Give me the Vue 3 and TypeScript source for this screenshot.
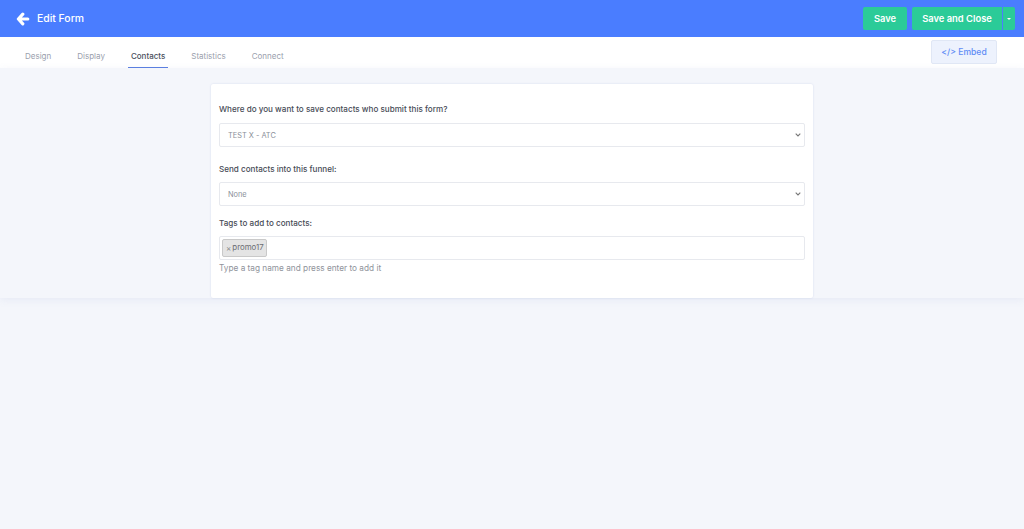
<template>
  <div class="page">
    <header class="topbar">
      <div class="topbar__title">
        <svg class="back-icon" width="14" height="14" viewBox="0 0 14 14" aria-hidden="true">
          <path d="M6.8 2.2 2.4 7l4.4 4.8M3.4 7h8.4" fill="none" stroke="#fff" stroke-width="3.2" stroke-linecap="round" stroke-linejoin="round" />
        </svg>
        <span>Edit Form</span>
      </div>
      <div class="topbar__actions">
        <button class="btn">Save</button>
        <div class="btn-group">
          <button class="btn btn--main">Save and Close</button>
          <button class="btn btn--caret"><span class="caret"></span></button>
        </div>
      </div>
    </header>

    <nav class="tabs">
      <div class="tabs__list">
        <a v-for="tab in tabs" :key="tab" class="tab" :class="{ 'tab--active': tab === 'Contacts' }">{{ tab }}</a>
      </div>
      <button class="embed">&lt;/&gt; Embed</button>
    </nav>

    <main class="panel">
      <section class="card">
        <label class="label">Where do you want to save contacts who submit this form?</label>
        <select class="field">
          <option>TEST X - ATC</option>
        </select>

        <label class="label label--second">Send contacts into this funnel:</label>
        <select class="field">
          <option>None</option>
        </select>

        <label class="label label--third">Tags to add to contacts:</label>
        <div class="tags">
          <span class="tag"><span class="tag__x">×</span>promo17</span>
        </div>
        <p class="hint">Type a tag name and press enter to add it</p>
      </section>
    </main>
  </div>
</template>

<script setup lang="ts">
const tabs: string[] = ['Design', 'Display', 'Contacts', 'Statistics', 'Connect']
</script>

<style>
html,
body {
  margin: 0;
  background: #f4f6fb;
}
</style>

<style scoped>
.page {
  height: 529px;
  overflow: hidden;
  background: #f4f6fb;
  font-family: Inter, "Liberation Sans", sans-serif;
}

.topbar {
  height: 37px;
  display: flex;
  align-items: center;
  justify-content: space-between;
  padding: 0 9px 0 16px;
  background: #4a7dff;
}

.topbar__title {
  display: flex;
  align-items: center;
  gap: 7px;
  color: #fff;
  font-size: 10.4px;
  font-weight: 500;
}

.topbar__actions {
  display: flex;
  gap: 5px;
}

.btn {
  width: 44px;
  height: 23px;
  padding: 0;
  border: none;
  border-radius: 2px;
  background: #2bcb98;
  color: #fff;
  font: 600 9.4px Inter, "Liberation Sans", sans-serif;
  white-space: nowrap;
}

.btn-group {
  display: flex;
}

.btn--main {
  width: 90px;
  border-radius: 2px 0 0 2px;
}

.btn--caret {
  width: 12px;
  margin-left: 1px;
  border-radius: 0 2px 2px 0;
  display: flex;
  align-items: center;
  justify-content: center;
}

.caret {
  width: 0;
  height: 0;
  border-left: 2px solid transparent;
  border-right: 2px solid transparent;
  border-top: 2px solid #fff;
}

.tabs {
  height: 31px;
  display: flex;
  justify-content: space-between;
  padding: 0 27px 0 25px;
  background: #fff;
}

.tabs__list {
  display: flex;
  gap: 26px;
}

.tab {
  position: relative;
  display: block;
  padding-top: 14px;
  color: #9aa0ad;
  font-size: 8px;
  line-height: 11px;
}

.tab--active {
  color: #4a4f5c;
  font-weight: 500;
}

.tab--active::after {
  content: "";
  position: absolute;
  left: -3px;
  right: -3px;
  top: 30px;
  height: 1px;
  background: #5b7fe0;
}

.embed {
  height: 24px;
  width: 66px;
  margin-top: 3px;
  padding: 0;
  border: 1px solid #e0e7f5;
  border-radius: 2px;
  background: #edf2fd;
  color: #5f8cf5;
  font: 500 8.6px Inter, "Liberation Sans", sans-serif;
}

.panel {
  height: 230px;
  padding-top: 16px;
  box-sizing: border-box;
  box-shadow: 0 2px 8px rgba(120, 140, 200, 0.1);
}

.card {
  width: 602px;
  height: 214px;
  margin: 0 auto;
  padding: 19px 8px 0;
  box-sizing: border-box;
  border-radius: 2px;
  background: #fff;
  box-shadow: 0 0 2px rgba(120, 140, 200, 0.25);
}

.label {
  display: block;
  color: #474b56;
  font-size: 8.1px;
  font-weight: 500;
  line-height: 12px;
  margin-bottom: 8px;
}

.label--second {
  margin-top: 16px;
  margin-bottom: 7px;
}

.label--third {
  margin-top: 11px;
  margin-bottom: 7px;
}

.field {
  display: block;
  width: 586px;
  height: 24px;
  padding: 0 8px;
  box-sizing: border-box;
  border: 1px solid #e7e9ee;
  border-radius: 2px;
  appearance: none;
  -webkit-appearance: none;
  background-color: #fff;
  background-image: url("data:image/svg+xml,%3Csvg xmlns='http://www.w3.org/2000/svg' width='6' height='4' viewBox='0 0 6 4'%3E%3Cpath d='M.7.7 3 3l2.3-2.3' fill='none' stroke='%23777' stroke-width='1.1'/%3E%3C/svg%3E");
  background-position: calc(100% - 3px) 50%;
  background-size: 6px 4px;
  background-repeat: no-repeat;
  color: #8a8f99;
  font: 400 7.4px Inter, "Liberation Sans", sans-serif;
}

.tags {
  display: flex;
  align-items: flex-start;
  width: 586px;
  height: 24px;
  padding: 2px;
  box-sizing: border-box;
  border: 1px solid #e7e9ee;
  border-radius: 2px;
  background: #fff;
}

.tag {
  display: inline-flex;
  align-items: center;
  height: 18px;
  padding: 0 2px 0 3px;
  box-sizing: border-box;
  border: 1px solid #c9c9c9;
  border-radius: 2px;
  background: #e4e4e4;
  color: #6a6d73;
  font-size: 7.9px;
  line-height: 1;
}

.tag__x {
  margin-right: 1px;
  color: #888;
  font-size: 8px;
}

.hint {
  margin: 2px 0 0;
  color: #8f939b;
  font-size: 8.25px;
  line-height: 12px;
}
</style>
